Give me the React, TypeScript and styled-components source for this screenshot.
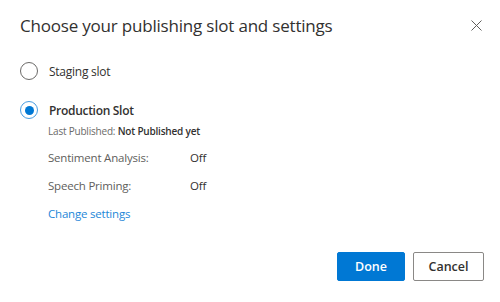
import React from 'react';
import styled, { createGlobalStyle } from 'styled-components';

const GlobalStyle = createGlobalStyle`
  html, body {
    margin: 0;
    padding: 0;
    background: #ffffff;
  }
  body {
    font-family: "Open Sans", "Noto Sans", Arial, sans-serif;
    color: #323130;
  }
`;

const Dialog = styled.div`
  width: 500px;
  height: 302px;
  box-sizing: border-box;
  padding: 10px 16px 0 20px;
  display: flex;
  flex-direction: column;
`;

const Header = styled.div`
  display: flex;
  justify-content: space-between;
  align-items: center;
  height: 30px;
`;

const Title = styled.h1`
  margin: 0;
  font-size: 17px;
  font-weight: 500;
  color: #323130;
  letter-spacing: -0.2px;
`;

const CloseButton = styled.button`
  border: none;
  background: none;
  padding: 0;
  width: 14px;
  height: 14px;
  margin-right: 1px;
  display: flex;
  align-items: center;
  justify-content: center;
  cursor: pointer;
`;

const Options = styled.div`
  margin-top: 21px;
  display: flex;
  flex-direction: column;
`;

const OptionRow = styled.label<{ $spaced?: boolean }>`
  display: flex;
  align-items: center;
  gap: 11px;
  height: 20px;
  margin-top: ${p => (p.$spaced ? '19px' : '0')};
  cursor: pointer;
`;

const Radio = styled.span<{ $checked?: boolean }>`
  width: 18px;
  height: 18px;
  box-sizing: border-box;
  border-radius: 50%;
  border: 1px solid ${p => (p.$checked ? '#4a9de0' : '#6b6a68')};
  display: flex;
  align-items: center;
  justify-content: center;
  &::after {
    content: '';
    width: 9px;
    height: 9px;
    border-radius: 50%;
    background: #0078d4;
    display: ${p => (p.$checked ? 'block' : 'none')};
  }
`;

const OptionLabel = styled.span<{ $strong?: boolean }>`
  font-size: 12px;
  line-height: 16px;
  margin-top: 2px;
  font-weight: ${p => (p.$strong ? 600 : 400)};
  letter-spacing: ${p => (p.$strong ? '-0.3px' : '-0.25px')};
  color: #323130;
`;

const Details = styled.div`
  padding-left: 28px;
  display: flex;
  flex-direction: column;
`;

const Meta = styled.div`
  font-size: 10px;
  line-height: 14px;
  letter-spacing: -0.2px;
  color: #6b6a68;
  margin-top: 4px;
  b {
    font-weight: 600;
    color: #323130;
  }
`;

const SettingsGrid = styled.div`
  display: grid;
  grid-template-columns: 142px auto;
  row-gap: 12px;
  margin-top: 12px;
  font-size: 11.5px;
  line-height: 16px;
  letter-spacing: -0.2px;
`;

const SettingName = styled.span`
  color: #605e5c;
`;

const SettingValue = styled.span`
  color: #323130;
  font-weight: 500;
`;

const Link = styled.a`
  margin-top: 12px;
  font-size: 11.5px;
  line-height: 16px;
  letter-spacing: -0.2px;
  color: #2387d8;
  text-decoration: none;
  cursor: pointer;
`;

const Footer = styled.div`
  margin-top: auto;
  margin-bottom: 21px;
  display: flex;
  justify-content: flex-end;
  gap: 8px;
`;

const Button = styled.button<{ $primary?: boolean }>`
  height: 29px;
  min-width: ${p => (p.$primary ? '68px' : '71px')};
  box-sizing: border-box;
  border-radius: 2px;
  font-family: inherit;
  font-size: 12.5px;
  font-weight: 600;
  padding: 0 14px;
  border: 1px solid ${p => (p.$primary ? '#0078d4' : '#8a8886')};
  background: ${p => (p.$primary ? '#0078d4' : '#ffffff')};
  color: ${p => (p.$primary ? '#ffffff' : '#323130')};
  cursor: pointer;
`;

export default function App() {
  return (
    <>
      <GlobalStyle />
      <Dialog>
        <Header>
          <Title>Choose your publishing slot and settings</Title>
          <CloseButton aria-label="Close">
            <svg width="11" height="11" viewBox="0 0 11 11">
              <path d="M0.5 0.5L10.5 10.5M10.5 0.5L0.5 10.5" stroke="#605e5c" strokeWidth="1" />
            </svg>
          </CloseButton>
        </Header>
        <Options>
          <OptionRow>
            <Radio />
            <OptionLabel>Staging slot</OptionLabel>
          </OptionRow>
          <OptionRow $spaced>
            <Radio $checked />
            <OptionLabel $strong>Production Slot</OptionLabel>
          </OptionRow>
          <Details>
            <Meta>
              Last Published: <b>Not Published yet</b>
            </Meta>
            <SettingsGrid>
              <SettingName>Sentiment Analysis:</SettingName>
              <SettingValue>Off</SettingValue>
              <SettingName>Speech Priming:</SettingName>
              <SettingValue>Off</SettingValue>
            </SettingsGrid>
            <Link>Change settings</Link>
          </Details>
        </Options>
        <Footer>
          <Button $primary>Done</Button>
          <Button>Cancel</Button>
        </Footer>
      </Dialog>
    </>
  );
}
